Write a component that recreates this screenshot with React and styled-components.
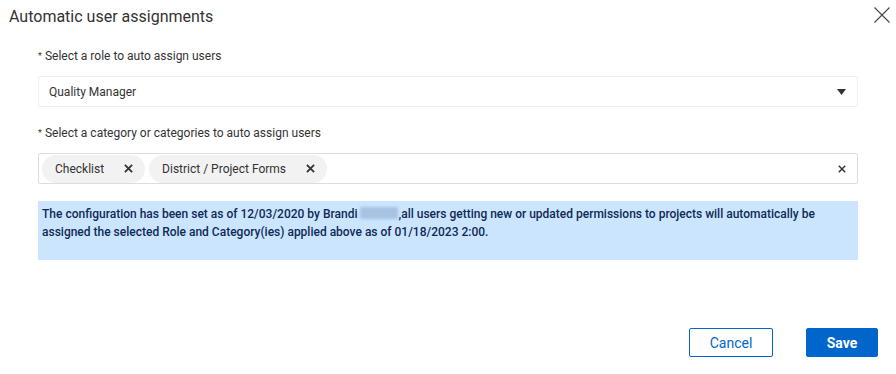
import React from "react";
import styled, { createGlobalStyle } from "styled-components";

const Global = createGlobalStyle`
  html, body { margin: 0; padding: 0; background: #fff; }
  body { font-family: Roboto, "Liberation Sans", Arial, sans-serif; color: #333; }
  * { box-sizing: border-box; }
`;

const Dialog = styled.div`
  width: 896px;
  height: 374px;
  display: flex;
  flex-direction: column;
  background: #fff;
`;

const Header = styled.div`
  height: 32px;
  display: flex;
  align-items: center;
  justify-content: space-between;
  padding: 0 6px 0 9px;
`;

const Title = styled.h1`
  margin: 0;
  font-size: 16px;
  font-weight: 400;
  color: #333;
`;

const CloseButton = styled.button`
  border: 0;
  background: none;
  padding: 0;
  width: 16px;
  height: 16px;
  margin-top: -2px;
  display: flex;
  cursor: pointer;
`;

const Body = styled.div`
  padding: 16px 38px 0 38px;
  display: flex;
  flex-direction: column;
  flex: 1;
`;

const Label = styled.div`
  font-size: 12px;
  line-height: 16px;
  color: #333;
  margin-bottom: 12px;
  span { font-size: 9px; vertical-align: 1px; margin-right: 3px; }
`;

const Field = styled.div`
  height: ${(p) => p.$h}px;
  border: 1px solid ${(p) => p.$border};
  border-radius: 2px;
  display: flex;
  align-items: center;
  padding: 0 10px 0 ${(p) => p.$pl}px;
  margin-bottom: ${(p) => p.$mb}px;
  font-size: 12px;
  color: #333;
`;

const Grow = styled.div`
  flex: 1;
  display: flex;
  align-items: center;
  gap: 4px;
`;

const Chip = styled.div`
  height: 28px;
  border-radius: 14px;
  background: #f2f2f2;
  display: flex;
  align-items: center;
  padding: 0 12px 0 13px;
  font-size: 12px;
  color: #333;
`;

const ChipX = styled.span`
  display: flex;
  margin-left: ${(p) => p.$gap}px;
`;

const Info = styled.div`
  background: #cce5ff;
  height: 59px;
  padding: 4px 4px;
  font-size: 12px;
  line-height: 18px;
  font-weight: 500;
  color: #0f2a55;
`;

const Redacted = styled.span`
  display: inline-block;
  width: 38px;
  height: 12px;
  vertical-align: -1px;
  background: #a8c2e2;
  filter: blur(1.5px);
  margin-left: 3px;
`;

const Footer = styled.div`
  display: flex;
  justify-content: flex-end;
  gap: 33px;
  padding: 0 18px 17px 0;
`;

const Button = styled.button`
  height: 29px;
  width: ${(p) => p.$w}px;
  border-radius: 2px;
  font-family: Roboto, "Liberation Sans", Arial, sans-serif;
  font-size: 14px;
  cursor: pointer;
  border: 1px solid #0066cc;
  background: ${(p) => (p.$primary ? "#0066cc" : "#fff")};
  color: ${(p) => (p.$primary ? "#fff" : "#0066cc")};
  font-weight: ${(p) => (p.$primary ? 700 : 400)};
`;

const Cross = ({ size = 9, w = 2, color = "#333" }) => (
  <svg width={size} height={size} viewBox="0 0 10 10">
    <path d="M1 1L9 9M9 1L1 9" stroke={color} strokeWidth={w} fill="none" />
  </svg>
);

export default function App() {
  return (
    <>
      <Global />
      <Dialog>
        <Header>
          <Title>Automatic user assignments</Title>
          <CloseButton aria-label="Close">
            <svg width="16" height="16" viewBox="0 0 16 16">
              <path d="M0.5 0.5L15.5 15.5M15.5 0.5L0.5 15.5" stroke="#444" strokeWidth="1.1" fill="none" />
            </svg>
          </CloseButton>
        </Header>
        <Body>
          <Label><span>*</span>Select a role to auto assign users</Label>
          <Field $h={31} $border="#eeeeee" $pl={10} $mb={18}>
            <Grow>Quality Manager</Grow>
            <svg width="9" height="6" viewBox="0 0 9 6" style={{ marginRight: 1 }}>
              <path d="M0 0H9L4.5 6Z" fill="#333" />
            </svg>
          </Field>
          <Label><span>*</span>Select a category or categories to auto assign users</Label>
          <Field $h={31} $border="#dddddd" $pl={3} $mb={17}>
            <Grow>
              <Chip>Checklist<ChipX $gap={20}><Cross /></ChipX></Chip>
              <Chip>District / Project Forms<ChipX $gap={20}><Cross /></ChipX></Chip>
            </Grow>
            <span style={{ display: "flex", marginRight: 1 }}><Cross size={8} w={1.8} /></span>
          </Field>
          <Info>
            The configuration has been set as of 12/03/2020 by Brandi<Redacted />,all users getting new or updated permissions to projects will automatically be assigned the selected Role and Category(ies) applied above as of 01/18/2023 2:00.
          </Info>
        </Body>
        <Footer>
          <Button $w={84}>Cancel</Button>
          <Button $w={72} $primary>Save</Button>
        </Footer>
      </Dialog>
    </>
  );
}
